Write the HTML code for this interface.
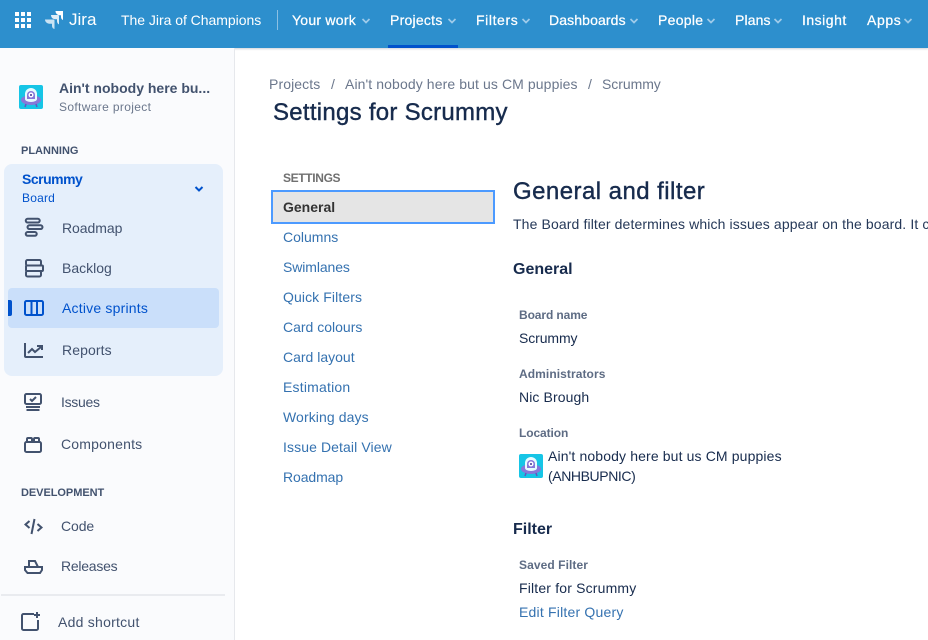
<!DOCTYPE html>
<html><head><meta charset="utf-8"><style>
html,body{margin:0;padding:0}
body{width:928px;height:640px;overflow:hidden;position:relative;background:#fff;font-family:"Liberation Sans",sans-serif;font-size:14px;color:#253858}
.a{position:absolute;white-space:nowrap;line-height:20px}
.n{color:#fff;top:10px;font-weight:400}
.w{color:#fff;-webkit-text-stroke:.25px #fff;letter-spacing:.25px}
.s{color:#42526e}
.l{color:#3572b0;left:283px}
.h{color:#5e6c84;font-size:12px;font-weight:700;left:519px}
.c{color:#172b4d;left:519px}
.g{font-size:11px;font-weight:700;color:#42526e;left:21px}
svg{position:absolute;overflow:visible}
.i{fill:none;stroke:#42526e;stroke-width:2}
.ch{fill:none;stroke:#9fcbea;stroke-width:1.700}
</style></head><body>
<div style="position:absolute;left:0;top:0;width:928px;height:48px;background:#2d8fcd;box-shadow:0 1px 2px rgba(9,30,66,.2)"></div>
<div style="position:absolute;left:0;top:48px;width:234px;height:592px;background:#fafbfd;border-right:1px solid #e6e8ec"></div>

<svg style="left:15px;top:12px" width="16" height="16" fill="#fff"><rect width="4" height="4"/><rect x="6" width="4" height="4"/><rect x="12" width="4" height="4"/><rect y="6" width="4" height="4"/><rect x="6" y="6" width="4" height="4"/><rect x="12" y="6" width="4" height="4"/><rect y="12" width="4" height="4"/><rect x="6" y="12" width="4" height="4"/><rect x="12" y="12" width="4" height="4"/></svg>
<svg style="left:45px;top:11px" width="19" height="18" fill="#fff"><path d="M18 0H10.500c0 2.600 2 4 4 4.200H16V6c0 1.600 1 2.800 2 3z"/><path d="M13.500 4H6c0 2.600 2 4.200 4 4.200h2V10c0 1.800 1 3 2 3.400V5z" opacity=".85"/><path d="M9 8.500H0c0 2.500 2.200 4.200 4.500 4.200H7V15c0 1.500 1 2.700 2.500 3V9.500z" opacity=".75"/></svg>
<div class="a" style="left:69px;top:10px;color:#fff;font-size:17px;font-weight:400">Jira</div>
<div class="a n" style="left:121px;letter-spacing:-.03px">The Jira of Champions</div>
<div style="position:absolute;left:277px;top:10px;width:1px;height:20px;background:#8cc0e3"></div>
<div class="a n w" style="left:292px">Your work</div>
<svg style="left:362px;top:18px" width="8" height="6"><path class="ch" d="M.5 1l3.500 3.500L7.500 1"/></svg>
<div class="a n w" style="left:390px">Projects</div>
<svg style="left:448px;top:18px" width="8" height="6"><path class="ch" d="M.5 1l3.500 3.500L7.500 1"/></svg>
<div class="a n w" style="left:476px;letter-spacing:.6px">Filters</div>
<svg style="left:522px;top:18px" width="8" height="6"><path class="ch" d="M.5 1l3.500 3.500L7.500 1"/></svg>
<div class="a n w" style="left:549px;letter-spacing:.12px">Dashboards</div>
<svg style="left:630px;top:18px" width="8" height="6"><path class="ch" d="M.5 1l3.500 3.500L7.500 1"/></svg>
<div class="a n w" style="left:658px;letter-spacing:.3px">People</div>
<svg style="left:707px;top:18px" width="8" height="6"><path class="ch" d="M.5 1l3.500 3.500L7.500 1"/></svg>
<div class="a n w" style="left:735px;letter-spacing:.12px">Plans</div>
<svg style="left:774px;top:18px" width="8" height="6"><path class="ch" d="M.5 1l3.500 3.500L7.500 1"/></svg>
<div class="a n w" style="left:802px;letter-spacing:.5px">Insight</div>
<div class="a n w" style="left:867px;letter-spacing:.6px">Apps</div>
<svg style="left:904px;top:18px" width="8" height="6"><path class="ch" d="M.5 1l3.500 3.500L7.500 1"/></svg>
<div style="position:absolute;left:388px;top:45px;width:70px;height:3px;background:#0052cc"></div>

<svg style="left:19px;top:85px" width="24" height="24"><rect width="24" height="24" rx="2" fill="#16c5e6"/><ellipse cx="12" cy="15" rx="10" ry="5" fill="#8777d9"/><path d="M6 14V9a6 6 0 0 1 12 0v5a6 3 0 0 1-12 0z" fill="#e6fcff"/><path d="M8 14V10a4 4 0 0 1 8 0v4z" fill="#8777d9"/><circle cx="12" cy="10" r="2.500" fill="#fff"/><circle cx="12" cy="10" r="1" fill="#403294"/><path d="M7 19l-1 3M17 19l1 3" stroke="#6554c0" stroke-width="1.500"/></svg>
<div class="a" style="left:59px;top:78px;font-weight:700;color:#42526e;letter-spacing:0">Ain't nobody here bu...</div>
<div class="a" style="left:59px;top:97px;font-size:12px;color:#6b778c;letter-spacing:.35px">Software project</div>

<div class="a g" style="top:141px;letter-spacing:0">PLANNING</div>
<div style="position:absolute;left:4px;top:164px;width:219px;height:212px;background:#e5effb;border-radius:8px"></div>
<div class="a" style="left:22px;top:169px;font-weight:700;color:#0052cc;letter-spacing:-.5px">Scrummy</div>
<div class="a" style="left:22px;top:188px;font-size:12px;color:#0052cc;letter-spacing:.2px">Board</div>
<svg style="left:195px;top:186px" width="8" height="6"><path d="M.5 1l3.500 3.500L7.500 1" fill="none" stroke="#0052cc" stroke-width="2"/></svg>

<svg style="left:24px;top:217px" width="20" height="20"><rect class="i" x="1.750" y="1.750" width="14" height="3.800" rx="1.900" stroke-width="1.500"/><rect class="i" x="3.500" y="8.250" width="15" height="3.800" rx="1.900" stroke-width="1.500"/><rect class="i" x="1.750" y="15" width="11" height="3.800" rx="1.900" stroke-width="1.500"/></svg>
<div class="a s" style="left:62px;top:218px;letter-spacing:-.05px">Roadmap</div>
<svg style="left:24px;top:258px" width="20" height="20"><rect class="i" x="2" y="2" width="15" height="5.500" rx="1.500"/><rect class="i" x="2" y="7.500" width="17" height="5.500" rx="1"/><rect class="i" x="2" y="13" width="15" height="5.500" rx="1.500"/></svg>
<div class="a s" style="left:62px;top:258px">Backlog</div>
<div style="position:absolute;left:8px;top:288px;width:211px;height:40px;background:#cadffa;border-radius:4px"></div>
<div style="position:absolute;left:8px;top:300px;width:4px;height:16px;background:#0052cc;border-radius:0 2px 2px 0"></div>
<svg style="left:24px;top:299px" width="20" height="18"><rect x="1" y="2" width="18" height="14" rx="1.500" fill="none" stroke="#0052cc" stroke-width="2"/><path d="M7.500 2v14M13 2v14" stroke="#0052cc" stroke-width="2"/></svg>
<div class="a" style="left:62px;top:298px;color:#0052cc;letter-spacing:.2px">Active sprints</div>
<svg style="left:24px;top:341px" width="20" height="18"><path class="i" d="M1 2v13a1 1 0 0 0 1 1h17"/><path class="i" d="M4 12l4-4 3 3 6-5M13 5h5v4" stroke-width="1.800"/></svg>
<div class="a s" style="left:62px;top:340px;letter-spacing:.1px">Reports</div>

<svg style="left:24px;top:392px" width="20" height="20"><rect class="i" x="1" y="2" width="16" height="10" rx="1.500"/><path class="i" d="M6 7l2 2 4-4M2 15h14M2.500 18h13" stroke-width="1.800"/></svg>
<div class="a s" style="left:61px;top:392px;letter-spacing:-.3px">Issues</div>
<svg style="left:24px;top:436px" width="20" height="18"><rect class="i" x="1" y="6" width="16" height="10" rx="1.500"/><path class="i" d="M3 6V3a1 1 0 0 1 1-1h3a1 1 0 0 1 1 1v3M10 6V3a1 1 0 0 1 1-1h3a1 1 0 0 1 1 1v3" stroke-width="1.800"/></svg>
<div class="a s" style="left:61px;top:434px;letter-spacing:.2px">Components</div>
<div class="a g" style="top:483px;letter-spacing:-.05px">DEVELOPMENT</div>
<svg style="left:24px;top:516px" width="20" height="20"><path class="i" d="M5.500 5L1.500 8.500 5.500 12M13.500 8l4 3.500-4 3.500M10.500 3L7.500 18"/></svg>
<div class="a s" style="left:61px;top:516px;letter-spacing:-.1px">Code</div>
<svg style="left:23px;top:558px" width="20" height="18"><path class="i" d="M2 9h17v3l-2 3H4.500L2 12zM6 9V3h6l3 6"/></svg>
<div class="a s" style="left:61px;top:556px;letter-spacing:-.25px">Releases</div>
<div style="position:absolute;left:1px;top:594px;width:224px;height:2px;background:#e9ebef"></div>
<svg style="left:21px;top:612px" width="20" height="20"><path class="i" d="M13 2H2.500A1.500 1.500 0 0 0 1 3.500v13A1.500 1.500 0 0 0 2.500 18h13a1.500 1.500 0 0 0 1.500-1.500V8"/><path d="M16 0v6M13 3h6" stroke="#42526e" stroke-width="2"/></svg>
<div class="a s" style="left:58px;top:612px;letter-spacing:.25px">Add shortcut</div>

<div class="a" style="left:269px;top:74px;color:#6b778c;letter-spacing:.1px">Projects</div>
<div class="a" style="left:331px;top:74px;color:#6b778c">/</div>
<div class="a" style="left:345px;top:74px;color:#6b778c;letter-spacing:.1px">Ain't nobody here but us CM puppies</div>
<div class="a" style="left:588px;top:74px;color:#6b778c">/</div>
<div class="a" style="left:602px;top:74px;color:#6b778c;letter-spacing:-.05px">Scrummy</div>
<div class="a" style="left:273px;top:99px;font-size:24px;line-height:28px;color:#172b4d;-webkit-text-stroke:.4px #172b4d;letter-spacing:.27px">Settings for Scrummy</div>

<div class="a" style="left:283px;top:168px;font-size:12px;font-weight:700;color:#707070;letter-spacing:-.35px">SETTINGS</div>
<div style="position:absolute;left:271px;top:190px;width:220px;height:30px;background:#e5e5e5;border:2px solid #4c9aff"></div>
<div class="a" style="left:283px;top:197px;font-weight:700;color:#333">General</div>
<div class="a l" style="top:227px">Columns</div>
<div class="a l" style="top:257px;letter-spacing:-.1px">Swimlanes</div>
<div class="a l" style="top:287px;letter-spacing:.1px">Quick Filters</div>
<div class="a l" style="top:317px">Card colours</div>
<div class="a l" style="top:347px">Card layout</div>
<div class="a l" style="top:377px;letter-spacing:.2px">Estimation</div>
<div class="a l" style="top:407px;letter-spacing:.1px">Working days</div>
<div class="a l" style="top:437px;letter-spacing:.1px">Issue Detail View</div>
<div class="a l" style="top:467px;letter-spacing:-.1px">Roadmap</div>

<div class="a" style="left:513px;top:177px;font-size:24px;line-height:30px;color:#172b4d;-webkit-text-stroke:.4px #172b4d;letter-spacing:.45px">General and filter</div>
<div class="a" style="left:513px;top:214px;width:415px;overflow:hidden;color:#253858;letter-spacing:.12px">The Board filter determines which issues appear on the board. It can be based</div>
<div class="a" style="left:513px;top:260px;font-size:16px;font-weight:700;color:#172b4d">General</div>
<div class="a h" style="top:305px;letter-spacing:-.1px">Board name</div>
<div class="a c" style="top:328px;letter-spacing:-.1px">Scrummy</div>
<div class="a h" style="top:364px;letter-spacing:.08px">Administrators</div>
<div class="a c" style="top:387px;letter-spacing:.1px">Nic Brough</div>
<div class="a h" style="top:423px;letter-spacing:-.1px">Location</div>
<svg style="left:519px;top:454px" width="24" height="24"><rect width="24" height="24" rx="2" fill="#16c5e6"/><ellipse cx="12" cy="15" rx="10" ry="5" fill="#8777d9"/><path d="M6 14V9a6 6 0 0 1 12 0v5a6 3 0 0 1-12 0z" fill="#e6fcff"/><path d="M8 14V10a4 4 0 0 1 8 0v4z" fill="#8777d9"/><circle cx="12" cy="10" r="2.500" fill="#fff"/><circle cx="12" cy="10" r="1" fill="#403294"/><path d="M7 19l-1 3M17 19l1 3" stroke="#6554c0" stroke-width="1.500"/></svg>
<div class="a c" style="left:548px;top:446px;letter-spacing:.13px">Ain't nobody here but us CM puppies</div>
<div class="a c" style="left:548px;top:466px;letter-spacing:-.4px">(ANHBUPNIC)</div>
<div class="a" style="left:513px;top:520px;font-size:16px;font-weight:700;color:#172b4d">Filter</div>
<div class="a h" style="top:555px;letter-spacing:.08px">Saved Filter</div>
<div class="a c" style="top:578px;letter-spacing:.17px">Filter for Scrummy</div>
<div class="a l" style="left:519px;top:602px;letter-spacing:.2px">Edit Filter Query</div>
</body></html>
